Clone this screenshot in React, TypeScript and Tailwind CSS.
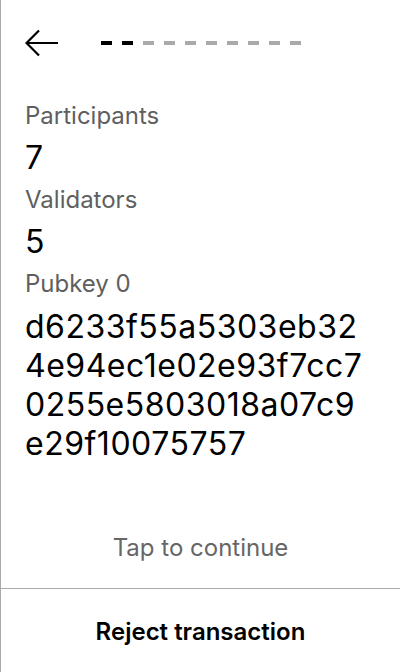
import React from "react";

const Label = ({ children, className = "" }: { children: React.ReactNode; className?: string }) => (
  <div className={`text-[24px] leading-[32px] text-[#5f5f5f] ${className}`}>{children}</div>
);

const Value = ({ children, className = "" }: { children: React.ReactNode; className?: string }) => (
  <div className={`text-[32px] leading-[39px] tracking-[0.5px] text-black ${className}`}>{children}</div>
);

export default function App() {
  const dashes = Array.from({ length: 10 }, (_, i) => i);
  return (
    <div
      className="w-[400px] h-[672px] bg-white border-l border-[#aaaaaa] flex flex-col"
      style={{ fontFamily: "Inter, 'Noto Sans', sans-serif" }}
    >
      <div className="h-[86px] flex items-center pl-[24px] shrink-0">
        <svg width="34" height="28" viewBox="0 0 34 28" className="shrink-0">
          <path d="M33 14H2M14 1.5L1.5 14L14 26.5" fill="none" stroke="black" strokeWidth="2.2" />
        </svg>
        <div className="flex gap-[10px] ml-[42px]">
          {dashes.map((i) => (
            <div key={i} className={`w-[11px] h-[4px] ${i < 2 ? "bg-black" : "bg-[#aaaaaa]"}`} />
          ))}
        </div>
      </div>
      <div className="px-[24px] flex flex-col">
        <Label className="mt-[14px]">Participants</Label>
        <Value className="mt-[6px]">7</Value>
        <Label className="mt-[7px]">Validators</Label>
        <Value className="mt-[6px]">5</Value>
        <Label className="mt-[7px]">Pubkey 0</Label>
        <Value className="mt-[7px] leading-[39.5px]">
          d6233f55a5303eb32
          <br />
          4e94ec1e02e93f7cc7
          <br />
          0255e5803018a07c9
          <br />
          e29f10075757
        </Value>
      </div>
      <div className="flex-1" />
      <div className="h-[80px] flex items-center justify-center text-[24px] text-[#666666]">
        Tap to continue
      </div>
      <div className="border-t border-[#aaaaaa] h-[84px] pt-[2px] flex items-center justify-center text-[24px] font-semibold text-black">
        Reject transaction
      </div>
    </div>
  );
}
